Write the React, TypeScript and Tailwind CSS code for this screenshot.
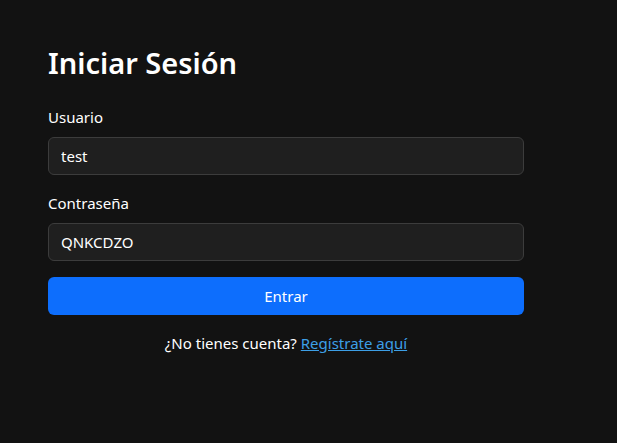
import React from 'react';

const font = { fontFamily: '"Noto Sans", "Open Sans", sans-serif' };

export default function App() {
  return (
    <div className="min-h-[443px] bg-[#121212] text-white" style={font}>
      <div className="w-[476px] ml-12 pt-[44px]">
        <h2 className="text-[29px] leading-[37px] font-semibold mb-6">Iniciar Sesión</h2>
        <form onSubmit={(e) => e.preventDefault()}>
          <div className="mb-4">
            <label className="block text-[15px] leading-6 mb-2">Usuario</label>
            <input
              className="block w-full h-[38px] px-3 rounded-md border border-[#3c3c3c] bg-[#1f1f1f] text-[15px] text-white outline-none"
              defaultValue="test"
            />
          </div>
          <div className="mb-4">
            <label className="block text-[15px] leading-6 mb-2">Contraseña</label>
            <input
              className="block w-full h-[38px] px-3 rounded-md border border-[#3c3c3c] bg-[#1f1f1f] text-[15px] text-white outline-none"
              defaultValue="QNKCDZO"
            />
          </div>
          <button
            type="submit"
            className="w-full h-[38px] rounded-md bg-[#0d6efd] text-[15px] text-white"
          >
            Entrar
          </button>
        </form>
        <p className="mt-4 text-center text-[15px] leading-6">
          ¿No tienes cuenta?{' '}
          <a href="#" className="text-[#3d9fe6] underline">
            Regístrate aquí
          </a>
        </p>
      </div>
    </div>
  );
}
